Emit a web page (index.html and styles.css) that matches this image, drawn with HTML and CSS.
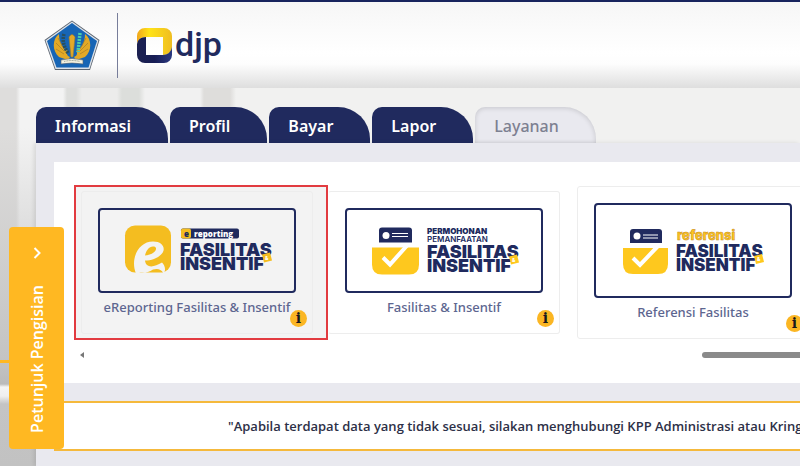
FILE: index.html
```html
<!DOCTYPE html>
<html lang="id">
    <head>
        <meta charset="UTF-8" />
        <meta name="viewport" content="width=device-width, initial-scale=1.0" />
        <title>DJP Online - Layanan</title>
        <link rel="stylesheet" href="styles.css">
    </head>
    <body>
        <header class="header">
            <svg class="emblem" viewBox="0 0 56 51" aria-hidden="true">
                <polygon points="28,.5 55.500,20 46,50 11,50 .5,20" fill="#5b6470"/>
                <polygon points="28,1.500 54.500,20.500 45.500,49 11.500,49 1.500,20.500" fill="#dde2e8"/>
                <polygon points="28,3 53,21 44.500,47.500 12.500,47.500 3,21" fill="#1765b5"/>
                <path d="M15 14C8 19 8 31 15 37l9 3 2-3c-3-1-4-4-2-6-5-2-9-8-9-17z" fill="#e3a927"/>
                <path d="M41 14c7 5 7 17 0 23l-9 3-2-3c3-1 4-4 2-6 5-2 9-8 9-17z" fill="#e3a927"/>
                <path d="M14 18l6 11M12 23l8 8M12 29l8 5M42 18l-6 11M44 23l-8 8M44 29l-8 5" stroke="#a67d2a" stroke-width=".7"/>
                <path d="M20 14c-2 7 0 13 4 19" fill="none" stroke="#2b4f5b" stroke-width="3.500" stroke-dasharray="2 1"/>
                <path d="M36 13l-2 19" fill="none" stroke="#4bd0a9" stroke-width="3.500" stroke-dasharray="2 1"/>
                <path d="M25 17q3-5 6 0l-2 20h-2z" fill="#e3a927" stroke="#9d7d2c" stroke-width=".6"/>
                <path d="M17 40q11-3 22 0v4q-11-2-22 0z" fill="#f4f1df" stroke="#59616b" stroke-width=".6"/>
                <path d="M20 41.500q8-2 16 0" fill="none" stroke="#707a70" stroke-width=".7" stroke-dasharray="1 .6"/>
            </svg>
            <span class="divider"></span>
            <a class="brand" href="#">
                <svg class="brand-mark" viewBox="0 0 35 35" aria-hidden="true">
                    <defs>
                        <linearGradient id="gold"><stop offset="0" stop-color="#f0a51c"/><stop offset=".35" stop-color="#ffe318"/><stop offset="1" stop-color="#efbd21"/></linearGradient>
                        <linearGradient id="navy"><stop offset="0" stop-color="#1c2150"/><stop offset=".5" stop-color="#171d55"/><stop offset="1" stop-color="#2c3a80"/></linearGradient>
                    </defs>
                    <path d="M8 0h19a8 8 0 0 1 8 8v11q0 7-9 8V9H9Q1 9 0 16V8a8 8 0 0 1 8-8z" fill="url(#gold)"/>
                    <path d="M0 16q1-7 9-7v18h17q8-1 9-8v8a8 8 0 0 1-8 8H8a8 8 0 0 1-8-8z" fill="url(#navy)"/>
                </svg>
                <span class="brand-name">djp</span>
            </a>
        </header>

        <main class="page">
            <nav class="tabs">
                <a class="tab" href="#">Informasi</a>
                <a class="tab" href="#">Profil</a>
                <a class="tab" href="#">Bayar</a>
                <a class="tab" href="#">Lapor</a>
                <a class="tab active" href="#">Layanan</a>
            </nav>

            <div class="panel">
                <section class="services">
                    <div class="cards">
                        <div class="highlight">
                            <article class="card">
                                <a class="card-link" href="#">
                                    <svg class="thumb" viewBox="0 0 194 80" aria-hidden="true">
                                        <rect x="25" y="15" width="46" height="47" rx="10" fill="#f4bd20"/>
                                        <path d="M36 63C30 49 38 31 53 31c10 0 13 7 9 12-4 5-11 7-17 7 1 8 9 7 17 2 3 3 4 7 2 11z" fill="#f3f3f3"/>
                                        <path d="M45 45c1-5 4-9 8-9 6 0 3 8-8 9z" fill="#f4bd20"/>
                                        <path d="M39 62q8 1 14-3 7-2 10 3z" fill="#f4bd20"/>
                                        <rect x="81" y="18" width="58" height="10" rx="2" fill="#202a5e"/>
                                        <rect x="81" y="18" width="10" height="10" rx="2" fill="#f4bd20"/>
                                        <text class="logo-tag" x="84" y="26">e</text>
                                        <text class="logo-tag light" x="94" y="26">reporting</text>
                                        <text class="logo-title" x="80" y="45">FASILITAS</text>
                                        <text class="logo-title" x="80" y="59">INSENTIF</text>
                                        <path d="M162 44l8-2 2 8-8 2z" fill="#f4bd20"/>
                                        <text class="logo-amp" x="165" y="49">&amp;</text>
                                    </svg>
                                    <span class="caption">eReporting Fasilitas &amp; Insentif</span>
                                </a>
                                <button class="info" type="button" aria-label="Info">i</button>
                            </article>
                        </div>

                        <article class="card">
                            <a class="card-link" href="#">
                                <svg class="thumb" viewBox="0 0 194 80" aria-hidden="true">
                                    <path d="M35 17h27a3 3 0 0 1 3 3v12H32V20a3 3 0 0 1 3-3z" fill="#202a5e"/>
                                    <circle cx="39" cy="25" r="3.500" fill="#fff"/>
                                    <path d="M45 23h16M45 26h16" stroke="#fff" stroke-width="1"/>
                                    <path d="M25 37h47v17q0 10-10 10H35q-10 0-10-10z" fill="#fec81e"/>
                                    <path d="M36 47l7 7 18-20" fill="none" stroke="#fff" stroke-width="4"/>
                                    <text class="logo-sub bold" x="80" y="23">PERMOHONAN</text>
                                    <text class="logo-sub" x="80" y="31">PEMANFAATAN</text>
                                    <text class="logo-title" x="80" y="47">FASILITAS</text>
                                    <text class="logo-title" x="80" y="61">INSENTIF</text>
                                    <path d="M162 46l8-2 2 8-8 2z" fill="#fec81e"/>
                                    <text class="logo-amp" x="165" y="51">&amp;</text>
                                </svg>
                                <span class="caption">Fasilitas &amp; Insentif</span>
                            </a>
                            <button class="info" type="button" aria-label="Info">i</button>
                        </article>

                        <article class="card large">
                            <a class="card-link" href="#">
                                <svg class="thumb" viewBox="0 0 194 91" aria-hidden="true">
                                    <path d="M37 24h26a3 3 0 0 1 3 3v11H34V27a3 3 0 0 1 3-3z" fill="#202a5e"/>
                                    <circle cx="41" cy="31" r="3.500" fill="#fff"/>
                                    <path d="M47 30h15M47 33h15" stroke="#fff" stroke-width="1"/>
                                    <path d="M27 43h45v16q0 10-10 10H37q-10 0-10-10z" fill="#fec81e"/>
                                    <path d="M37 53l7 7 18-19" fill="none" stroke="#fff" stroke-width="4"/>
                                    <text class="logo-ref" x="81" y="35">referensi</text>
                                    <text class="logo-title small" x="80" y="52">FASILITAS</text>
                                    <text class="logo-title small" x="80" y="66">INSENTIF</text>
                                    <path d="M158 51l8-2 2 8-8 2z" fill="#fec81e"/>
                                    <text class="logo-amp" x="161" y="56">&amp;</text>
                                </svg>
                                <span class="caption">Referensi Fasilitas</span>
                            </a>
                            <button class="info" type="button" aria-label="Info">i</button>
                        </article>
                    </div>
                    <div class="scrollbar">
                        <span class="scroll-arrow"></span>
                        <span class="scroll-thumb"></span>
                    </div>
                </section>

                <p class="notice">"Apabila terdapat data yang tidak sesuai, silakan menghubungi KPP Administrasi atau Kring</p>
            </div>
        </main>

        <button class="guide" type="button">
            <svg class="guide-arrow" viewBox="0 0 8 12" aria-hidden="true"><path d="M1.500 1l5 5-5 5" fill="none" stroke="#fff" stroke-width="2"/></svg>
            <span class="guide-label">Petunjuk Pengisian</span>
        </button>
    </body>
</html>
```
FILE: styles.css
```css
* {
    box-sizing: border-box;
}
body {
    margin: 0;
    min-height: 100vh;
    display: flex;
    flex-direction: column;
    overflow: hidden;
    font-family: 'Open Sans', 'Noto Sans', sans-serif;
    color: #2d3047;
    background: #f1f1f0;
}
a {
    text-decoration: none;
    color: inherit;
}
button {
    border: 0;
    padding: 0;
    font-family: inherit;
    cursor: pointer;
}

.header {
    height: 88px;
    flex: none;
    display: flex;
    align-items: center;
    padding: 0 44px;
    border-top: 2px solid #17245d;
    background: linear-gradient(#f6f6f6, #fff 60%, #fdfdfd 72%, #dedede);
}
.emblem {
    width: 56px;
    height: 51px;
}
.divider {
    width: 1px;
    height: 65px;
    margin: 0 19px 0 17px;
    background: #777d9a;
}
.brand {
    display: flex;
    align-items: center;
    gap: 3px;
}
.brand-mark {
    width: 35px;
    height: 35px;
}
.brand-name {
    padding-bottom: 2px;
    font-family: Roboto, sans-serif;
    font-size: 34px;
    line-height: 36px;
    font-weight: 500;
    color: #202a5e;
}

.page {
    flex: 1;
    display: flex;
    flex-direction: column;
    padding: 19px 0 0 36px;
    /* faded building behind the content */
    background:
        linear-gradient(transparent 272px, #ffb822 272px, #ffb822 275px, transparent 275px) 0 0 / 36px 100% no-repeat,
        linear-gradient(rgba(220, 220, 220, 0) 40px, #c4c4c4 270px, #bbb 296px, #f4f4f4 299px, #efefef 308px, #c4c4c4 316px, #c2c2c2) 0 0 / 36px 100% no-repeat,
        linear-gradient(90deg, #dedddc 16px, #f3f3f3 20px, #f3f3f3 63px, #dddedc 67px, #dddedc 76px, #ececeb 82px, #ececeb 117px, #dcdedb 122px, #dcdedb 139px, #f1f1f1 145px, #f1f1f1 200px, #dedddb 204px, #dedddb 230px, #f1f1f0 236px);
}

.tabs {
    display: flex;
    gap: 2px;
}
.tab {
    height: 36px;
    padding: 0 37px 0 19px;
    border-radius: 10px 32px 0 0;
    font-family: 'Noto Sans', sans-serif;
    font-size: 16px;
    line-height: 38px;
    font-weight: 600;
    color: #fff;
    background: #202a5e;
}
.tab.active {
    font-weight: 500;
    color: #7d8091;
    background: #e9e9ef;
    box-shadow: inset 0 1px 5px rgba(0, 0, 0, .15);
}

.panel {
    flex: 1;
    padding: 19px 0 15px 18px;
    background: #e9e9ef;
    box-shadow: -2px 0 4px rgba(0, 0, 0, .1);
}
.services {
    height: 221px;
    padding: 23px 0 0 20px;
    background: #fff;
}
.cards {
    height: 155px;
    display: flex;
    align-items: center;
}
.highlight {
    flex: none;
    padding: 4px 13px 4px 5px;
    border: 2px solid #e23b40;
    background: #f3f3f3;
}
.card {
    position: relative;
    flex: none;
    width: 232px;
    height: 143px;
    padding: 16px;
    border: 1px solid #ededed;
    border-radius: 3px;
}
.highlight + .card {
    border-left-color: transparent;
}
.card-link {
    display: flex;
    flex-direction: column;
    align-items: center;
    gap: 4px;
}
.thumb {
    width: 198px;
    height: 85px;
    border: 2px solid #202a5e;
    border-radius: 4px;
}
.caption {
    font-family: 'Noto Sans', sans-serif;
    font-size: 13px;
    line-height: 20px;
    font-weight: 500;
    white-space: nowrap;
    color: #5d6690;
}
.card.large {
    height: 153px;
    margin-left: 17px;
}
.card.large .thumb {
    height: 95px;
}
.info {
    position: absolute;
    right: 5px;
    bottom: 6px;
    width: 17px;
    height: 17px;
    border-radius: 50%;
    font: bold 14px/17px 'DejaVu Serif', serif;
    text-align: center;
    color: #17181c;
    background: #fbb623;
}

.logo-title {
    font: 900 18px Inter, sans-serif;
    fill: #202a5e;
}
.logo-title.small {
    font-size: 17px;
}
.logo-sub {
    font: 600 8px Inter, sans-serif;
    fill: #202a5e;
}
.logo-sub.bold {
    font-weight: 900;
}
.logo-tag {
    font: 800 8px 'Open Sans', sans-serif;
    fill: #202a5e;
}
.logo-tag.light {
    fill: #fff;
}
.logo-ref {
    font: 800 13px Inter, sans-serif;
    fill: #fec81e;
    stroke: #c98a22;
    stroke-width: .5px;
}
.logo-amp {
    font: 800 5px Inter, sans-serif;
    fill: #fff;
}

.scrollbar {
    display: flex;
    align-items: center;
    justify-content: space-between;
    height: 10px;
    margin-top: 10px;
    padding-left: 6px;
}
.scroll-arrow {
    border: 3px solid transparent;
    border-right: 4px solid #777;
    border-left: 0;
}
.scroll-thumb {
    width: 98px;
    height: 6px;
    border-radius: 3px 0 0 3px;
    background: #8a8a8a;
}

.notice {
    margin: 18px 0 0;
    padding: 0 0 0 174px;
    border: solid #f5b93c;
    border-width: 2px 0;
    font-size: 13px;
    line-height: 46px;
    font-weight: 600;
    white-space: nowrap;
    background: #fff;
}

/* side tab over the page */
.guide {
    position: absolute;
    top: 227px;
    left: 9px;
    width: 55px;
    display: flex;
    flex-direction: column;
    align-items: center;
    gap: 26px;
    padding: 20px 0 16px;
    border-radius: 4px;
    color: #fff;
    background: #ffb822;
}
.guide-arrow {
    width: 8px;
    height: 12px;
}
.guide-label {
    writing-mode: vertical-rl;
    transform: rotate(180deg);
    font-size: 16px;
    line-height: 22px;
    font-weight: 600;
}
```
